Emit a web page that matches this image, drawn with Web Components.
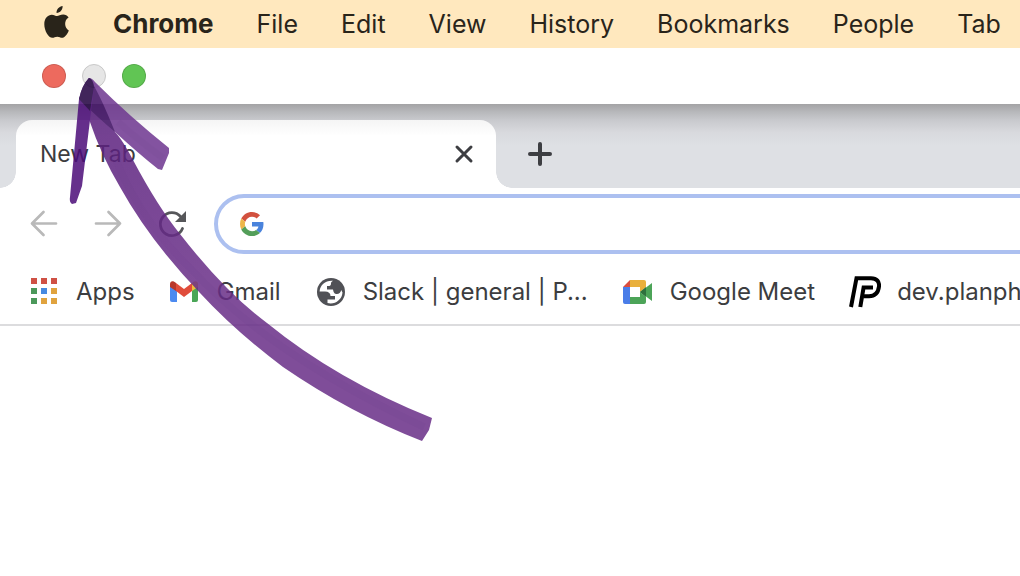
<!DOCTYPE html>
<html lang="en">
<head>
<meta charset="utf-8">
<title>New Tab</title>
<style>
html,body{margin:0}
body{min-height:100vh;font-family:Inter,"Liberation Sans",sans-serif;background:#fff;color:#3c3d40}
</style>
</head>
<body>
<browser-demo></browser-demo>
<script>
const define = (name, html) => customElements.define(name, class extends HTMLElement {
  constructor() {
    super();
    const t = document.createElement('template');
    t.innerHTML = html;
    this.attachShadow({mode: 'open'}).append(t.content.cloneNode(true));
  }
});
const reset = 'button{font:inherit;color:inherit;border:0;padding:0;margin:0;background:none;display:block}svg{display:block}';

define('menu-item', `<style>${reset}:host{display:block;flex:none}button{line-height:48px;white-space:nowrap}</style>
<button type="button"><slot></slot></button>`);

define('menu-bar', `<style>${reset}
:host{display:block;background:#ffe8be;color:#29241a;font-size:25px}
nav{display:flex;align-items:center;height:48px;padding-left:44px;gap:43px;overflow:hidden}
.apple{flex:none;padding-bottom:4px}
menu-item:first-of-type{font-weight:700;font-size:26px}
</style>
<nav aria-label="Menu bar">
<button class="apple" type="button" aria-label="Apple menu"><svg width="26" height="32" viewBox="0 0 26 32"><path fill="#29241a" d="M18.6 0c.3 3.5-2.6 7-6 6.900C12.200 3.600 15.300.300 18.600 0zM24.800 24.400c-1.400 3.700-4.200 7.400-6.700 7.400-1.800 0-2.600-1.100-4.800-1.100-2.300 0-3.200 1.100-4.900 1.100C4.500 31.800.300 24.700.300 18.200c0-6.100 3.700-9.500 7.500-9.500 2.200 0 4 1.400 5.300 1.400 1.400 0 3.500-1.500 6.100-1.500 2.200 0 4.200 1.100 5.400 2.800-4.900 2.900-4.300 10.200.2 13z"/></svg></button>
<menu-item>Chrome</menu-item><menu-item>File</menu-item><menu-item>Edit</menu-item><menu-item>View</menu-item><menu-item>History</menu-item><menu-item>Bookmarks</menu-item><menu-item>People</menu-item><menu-item>Tab</menu-item>
</nav>`);

define('window-controls', `<style>${reset}
:host{display:flex;align-items:center;gap:16px;height:56px;padding-left:42px}
button{width:24px;height:24px;border-radius:50%;border:1px solid #0002}
.close{background:#ed6a5e}.min{background:#e6e6e6;border-color:#c9c9c9}.zoom{background:#61c554}
</style>
<button class="close" type="button" aria-label="Close window"></button><button class="min" type="button" aria-label="Minimize window"></button><button class="zoom" type="button" aria-label="Zoom window"></button>`);

define('tab-strip', `<style>${reset}
:host{display:flex;height:68px;padding:16px 16px 0;gap:32px;align-items:stretch;background:linear-gradient(#a3a3a5 0,#b7b8bb 8px,#c8c9cd 16px,#d8d9dd 28px,#dee0e4 42px)}
.tab{position:relative;width:480px;box-sizing:border-box;padding:0 20px 0 24px;display:flex;align-items:center;justify-content:space-between;font-size:23px;border-radius:16px 16px 0 0;background:linear-gradient(#f5f5f5,#fff 16px)}
.tab::before,.tab::after{content:"";position:absolute;bottom:0;width:16px;height:16px}
.tab::before{right:100%;background:radial-gradient(circle at 0 0,#0000 15.5px,#fff 16px)}
.tab::after{left:100%;background:radial-gradient(circle at 100% 0,#0000 15.5px,#fff 16px)}
.add{align-self:center}
</style>
<div class="tab"><span class="title">New Tab</span><button type="button" aria-label="Close tab"><svg width="24" height="24" viewBox="0 0 24 24"><path d="M5 5 19 19M19 5 5 19" stroke="#3d3e42" stroke-width="3" stroke-linecap="round"/></svg></button></div>
<button class="add" type="button" aria-label="New tab"><svg width="24" height="24" viewBox="0 0 24 24"><path d="M12 2V22M2 12H22" stroke="#3d3e42" stroke-width="4" stroke-linecap="round"/></svg></button>`);

define('tool-bar', `<style>${reset}
:host{display:flex;align-items:center;padding:6px 0;overflow:hidden}
.nav{display:flex;gap:32px;padding:0 26px 0 28px}
form{flex:1;margin:0 -32px 0 0;display:flex;align-items:center;gap:16px;height:60px;box-sizing:border-box;border:4px solid #acc0f0;border-radius:30px;padding-left:22px}
input{flex:1;min-width:0;height:40px;border:0;outline:0;padding:0;background:none;font:24px Inter,sans-serif;color:inherit}
</style>
<div class="nav">
<button type="button" aria-label="Back"><svg width="32" height="32" viewBox="0 0 32 32" fill="none" stroke="#b9b9b9" stroke-width="2.700" stroke-linecap="round" stroke-linejoin="round"><path d="M28 15.500H4.500M15.500 4 4 15.500 15.500 27"/></svg></button>
<button type="button" aria-label="Forward"><svg width="32" height="32" viewBox="0 0 32 32" fill="none" stroke="#b9b9b9" stroke-width="2.700" stroke-linecap="round" stroke-linejoin="round"><path d="M4 15.500H28M16.500 4 28 15.500 16.500 27"/></svg></button>
<button type="button" aria-label="Reload"><svg width="32" height="32" viewBox="0 0 32 32"><path d="M26.500 20.500A11.500 11.500 0 1 1 24.500 8.500" fill="none" stroke="#56575a" stroke-width="2.800" stroke-linecap="round"/><path fill="#56575a" d="M30 3V14H19z"/></svg></button>
</div>
<form><svg width="24" height="24" viewBox="0 0 48 48"><path fill="#d2513f" d="M24 9.500c3.540 0 6.710 1.220 9.210 3.600l6.850-6.850C35.900 2.380 30.470 0 24 0 14.620 0 6.510 5.380 2.560 13.220l7.980 6.190C12.430 13.720 17.740 9.500 24 9.500z"/><path fill="#4a83dc" d="M46.980 24.550c0-1.570-.15-3.090-.38-4.550H24v9.020h12.940c-.58 2.960-2.260 5.480-4.780 7.180l7.730 6c4.510-4.180 7.090-10.360 7.090-17.650z"/><path fill="#edb64a" d="M10.530 28.590c-.48-1.450-.76-2.990-.76-4.590s.27-3.140.76-4.590l-7.980-6.190C.92 16.460 0 20.120 0 24c0 3.880.92 7.540 2.560 10.780l7.970-6.190z"/><path fill="#539e59" d="M24 48c6.480 0 11.930-2.130 15.890-5.810l-7.730-6c-2.150 1.450-4.920 2.300-8.160 2.300-6.260 0-11.570-4.220-13.470-9.910l-7.980 6.190C6.510 42.620 14.620 48 24 48z"/></svg>
<input type="text" aria-label="Search Google or type a URL"></form>`);

define('bookmark-link', `<style>${reset}
:host{display:block;flex:none}a{display:flex;align-items:center;gap:16px;color:inherit;text-decoration:none;white-space:nowrap}
span{padding-bottom:2px}
</style><a href="#"><slot name="icon"></slot><span><slot></slot></span></a>`);

define('bookmark-bar', `<style>${reset}
:host{display:block;border-bottom:2px solid #dcdcde}
nav{display:flex;align-items:center;height:64px;padding-left:28px;gap:34px;overflow:hidden;font-size:24px}
svg{flex:none}
</style>
<nav aria-label="Bookmarks">
<bookmark-link><svg slot="icon" width="32" height="32" viewBox="0 0 32 32"><path fill="#cf5145" d="M3 2h6v6H3zM13 2h6v6h-6zM23 2h6v6h-6z"/><path fill="#4b985a" d="M3 12h6v6H3zM3 22h6v6H3z"/><path fill="#478ae0" d="M13 12h6v6h-6z"/><path fill="#e0a33e" d="M23 12h6v6h-6zM13 22h6v6h-6zM23 22h6v6h-6z"/></svg>Apps</bookmark-link>
<bookmark-link><svg slot="icon" width="32" height="32" viewBox="0 0 32 32"><path fill="#4c8af0" d="M1 10 8 14V26H3Q1 26 1 24z"/><path fill="#4aa657" d="M23 14 29 10V24Q29 26 27 26H23z"/><path fill="#e04c3b" d="M7 7 15 13 23 7V15L15 21 7 15z"/><path fill="#b8372b" d="M1 11V8C1 5 4 4 7 7V15z"/><path fill="#eebc3c" d="M23 7C26 4 29 5 29 8V11L23 15z"/></svg>Gmail</bookmark-link>
<bookmark-link><svg slot="icon" width="32" height="32" viewBox="0 0 32 32"><circle cx="16" cy="16" r="14" fill="#505156"/><path fill="#fff" d="M18 4.700C11 4 5 8.500 4.600 15.500H10c3.500 0 5.500 1.500 5.500 4.500H20v3.500h-7.500V27c7 2 14.500-3 15-10.500-.5-1-.8-1.500-1.300-2.500-.6 3-2.700 4.500-5.200 4-2-.5-2.500-2-3-4.500h-6V10c3 .2 4-.5 4-2.500 0-1 .5-2 2-2.800z"/></svg>Slack | general | P...</bookmark-link>
<bookmark-link><svg slot="icon" width="32" height="32" viewBox="0 0 32 32"><path fill="#d94d3e" d="M8 4v7H1z"/><path fill="#4a7de8" d="M1 11h7v17H3q-2 0-2-2z"/><path fill="#e9b03c" d="M8 4h14q2 0 2 2v5l-6 5v-5H8z"/><path fill="#4ca458" d="M8 21h10v-5l6 5v5q0 2-2 2H8z"/><path fill="#4ca458" d="M18 16 30 7v18z"/><path fill="#2e713d" d="M18 16 24 11v10z"/></svg>Google Meet</bookmark-link>
<bookmark-link><svg slot="icon" width="32" height="32" viewBox="0 0 32 32"><path fill="none" stroke="#000" stroke-width="4" d="M2 31 7.500 2.200H22C28 2.200 30.500 6 30 10.500 29.200 17 26 20.200 20 20.200H14.500"/><path fill="none" stroke="#000" stroke-width="4" d="M11.300 31 14.600 11.500H24"/></svg>dev.planph</bookmark-link>
</nav>`);

define('marker-arrow', `<style>${reset}
:host{position:absolute;left:0;top:0;pointer-events:none;opacity:.85}
</style>
<svg width="440" height="450" viewBox="0 0 440 450" aria-hidden="true">
<defs><linearGradient id="s" gradientUnits="userSpaceOnUse" x1="80" y1="80" x2="200" y2="280"><stop offset="0" stop-color="#581d7c"/><stop offset="1" stop-color="#692e88"/></linearGradient>
<clipPath id="c"><path d="M88 79Q97 90 115 132L90 122 80 98Z"/></clipPath></defs>
<path fill="url(#s)" d="M88 79Q97 90 115 132Q122 139 133 160Q158 207 180 234Q226 293 267 323Q337 380 432 418L429 430 422 441Q350 413 283 367Q235 331 200 293Q150 241 120 187Q101 155 90 122L80 98Z"/>
<path fill="#6e3690" d="M89 78Q92 78 95 82Q129 116 169 148V153L162 170 158 169Q139 154 115 132Q98 118 79 99Z"/>
<path fill="#3b0a60" d="M89 78Q99 92 115 132Q98 118 79 99Z"/>
<path fill="#4c0c79" d="M89 78Q93 79 94 87L82 186 76 203 72 204Q69 202 70 197L79 99Q82 85 89 78Z"/>
<path fill="#20003f" d="M89 78Q93 79 94 87L90 111 79 99Q82 85 89 78Z"/>
<g fill="none" stroke="#4c1470" stroke-opacity=".08" stroke-width="7"><path d="M112 150Q137 217 190 268Q270 355 424 427"/><path d="M118 122Q138 140 163 158"/></g>
</svg>`);

define('browser-demo', `<style>:host{display:block;position:relative}</style>
<menu-bar></menu-bar>
<main><window-controls></window-controls><tab-strip></tab-strip><tool-bar></tool-bar><bookmark-bar></bookmark-bar></main>
<marker-arrow></marker-arrow>`);
</script>
</body>
</html>
